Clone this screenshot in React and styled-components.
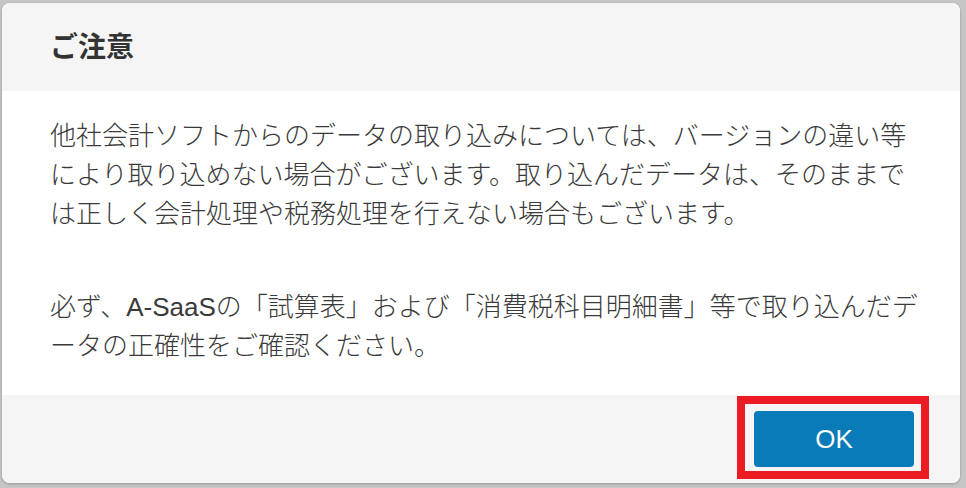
import React from 'react';
import styled, { createGlobalStyle } from 'styled-components';

const GlobalStyle = createGlobalStyle`
  html, body {
    margin: 0;
    padding: 0;
    background: #c6c6c6;
  }
  body {
    font-family: "Liberation Sans", "Noto Sans CJK JP", sans-serif;
  }
`;

const Screen = styled.div`
  width: 966px;
  height: 488px;
  padding: 3px 0 0 2px;
  box-sizing: border-box;
  overflow: hidden;
`;

const Modal = styled.div`
  width: 958px;
  height: 480px;
  display: flex;
  flex-direction: column;
  background: #fff;
  border-radius: 8px;
  overflow: hidden;
  box-shadow: 0 1px 3px rgba(0, 0, 0, 0.25);
`;

const Header = styled.div`
  height: 88px;
  flex: none;
  box-sizing: border-box;
  display: flex;
  align-items: center;
  padding: 0 0 5px 48px;
  background: #f5f5f5;
`;

const Title = styled.h2`
  margin: 0;
  font-size: 28px;
  font-weight: 700;
  color: #333;
  font-family: "Noto Sans CJK JP", sans-serif;
`;

const Body = styled.div`
  flex: 1;
  padding: 26px 40px 0 48px;
  color: #3a3a3a;
  font-size: 26px;
  font-weight: 300;
  line-height: 39px;
`;

const Paragraph = styled.p`
  margin: 0 0 ${(p) => p.gap || 0}px;
  white-space: nowrap;
`;

const Footer = styled.div`
  height: 88px;
  flex: none;
  display: flex;
  align-items: center;
  justify-content: flex-end;
  padding-right: 46px;
  background: #f5f5f5;
`;

const ButtonWrap = styled.div`
  position: relative;
`;

const OkButton = styled.button`
  width: 160px;
  height: 56px;
  border: none;
  border-radius: 4px;
  background: #0a7bb9;
  color: #fff;
  font-family: "Liberation Sans", sans-serif;
  font-size: 26px;
  cursor: pointer;
`;

const Highlight = styled.div`
  position: absolute;
  left: -17px;
  right: -15px;
  top: -15px;
  bottom: -12px;
  border: 8px solid #ed1c24;
  pointer-events: none;
`;

export default function App() {
  return (
    <Screen>
      <GlobalStyle />
      <Modal>
        <Header>
          <Title>ご注意</Title>
        </Header>
        <Body>
          <Paragraph gap={54}>
            他社会計ソフトからのデータの取り込みについては、バージョンの違い等
            <br />
            により取り込めない場合がございます。取り込んだデータは、そのままで
            <br />
            は正しく会計処理や税務処理を行えない場合もございます。
          </Paragraph>
          <Paragraph>
            必ず、A-SaaSの「試算表」および「消費税科目明細書」等で取り込んだデ
            <br />
            ータの正確性をご確認ください。
          </Paragraph>
        </Body>
        <Footer>
          <ButtonWrap>
            <OkButton>OK</OkButton>
            <Highlight />
          </ButtonWrap>
        </Footer>
      </Modal>
    </Screen>
  );
}
